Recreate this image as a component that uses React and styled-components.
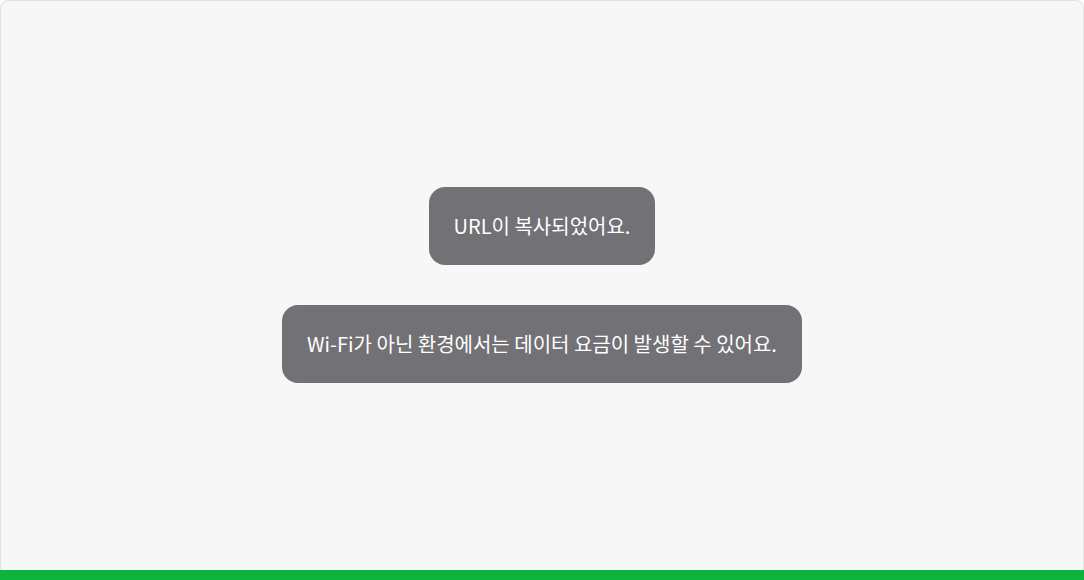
import React from "react"
import styled, { createGlobalStyle } from "styled-components"

const GlobalStyle = createGlobalStyle`
  html, body {
    margin: 0;
    padding: 0;
    background: #ffffff;
  }
  #root {
    height: 100vh;
  }
`

const Page = styled.div`
  width: 1084px;
  height: 580px;
  display: flex;
  flex-direction: column;
  font-family: "Noto Sans CJK KR", "Noto Sans", sans-serif;
`

const Stage = styled.div`
  flex: 1;
  display: flex;
  flex-direction: column;
  align-items: center;
  justify-content: center;
  gap: 40px;
  padding-bottom: 2px;
  background: #f7f7f7;
  border: 1px solid #e3e3e3;
  border-bottom: none;
  border-radius: 8px 8px 0 0;
`

const Toast = styled.div`
  height: 78px;
  box-sizing: border-box;
  display: flex;
  align-items: center;
  padding: 0 25px;
  border-radius: 16px;
  background: #727175;
  color: #ffffff;
  font-size: 20px;
  white-space: nowrap;
`

const BottomBar = styled.div`
  height: 10px;
  background: #0db33b;
`

const App = () => {
  return (
    <Page>
      <GlobalStyle />
      <Stage>
        <Toast>URL이 복사되었어요.</Toast>
        <Toast>Wi-Fi가 아닌 환경에서는 데이터 요금이 발생할 수 있어요.</Toast>
      </Stage>
      <BottomBar />
    </Page>
  )
}

export default App
